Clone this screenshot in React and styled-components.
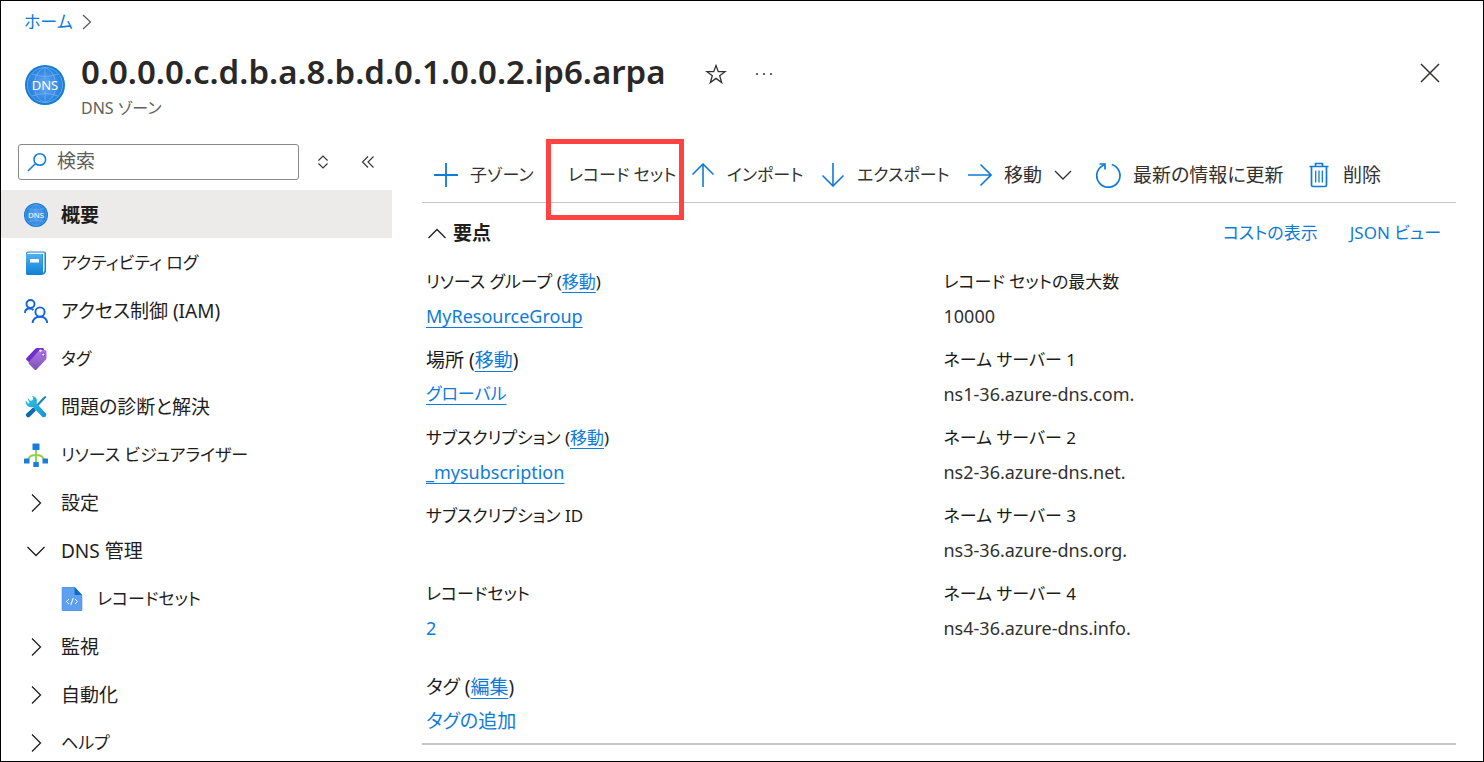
import React from "react";
import styled, { createGlobalStyle, css } from "styled-components";

const BLUE = "#0f7bd8";

const GlobalStyle = createGlobalStyle`
  *, *::before, *::after { box-sizing: border-box; }
  body {
    margin: 0;
    background: #fff;
    color: #1f1e1d;
    font-family: "Noto Sans", "Noto Sans CJK JP", sans-serif;
    font-size: 19px;
    line-height: 28px;
    font-feature-settings: "palt";
  }
  button, input { font: inherit; font-feature-settings: inherit; color: inherit; }
`;

/* Katakana-heavy labels are set a step smaller than kanji and Latin ones. */
const textSize = (p) => css`
  font-size: ${p.$kana ? 17 : 19}px;
`;

const Frame = styled.div`
  display: flex;
  flex-direction: column;
  height: 100vh;
  overflow: hidden;
  border: 1px solid #000;
`;

const Breadcrumb = styled.nav`
  display: flex;
  align-items: center;
  gap: 8px;
  height: 42px;
  flex: none;
  padding-left: 23px;
  font-size: 17px;
`;

const Link = styled.a`
  color: ${BLUE};
  text-decoration: none;
  ${(p) =>
    p.$underlined &&
    css`
      text-decoration: underline;
      text-decoration-thickness: 1px;
      text-decoration-skip-ink: none;
      text-underline-offset: 4px;
    `}
`;

const Header = styled.header`
  display: flex;
  align-items: flex-start;
  height: 94px;
  flex: none;
  padding: 5px 41px 0 24px;
`;

const HeaderLogo = styled.span`
  display: flex;
  margin: 17px 16px 0 0;
`;

const Title = styled.h1`
  margin: 0;
  font-size: 33px;
  line-height: 48px;
  font-weight: 600;
  color: #292827;
`;

const Subtitle = styled.p`
  margin: 0;
  font-size: 16px;
  line-height: 24px;
  color: #605e5c;
`;

const IconButton = styled.button`
  display: flex;
  align-items: center;
  justify-content: center;
  width: 24px;
  height: 24px;
  padding: 0;
  border: 0;
  background: none;
  color: #323130;
`;

const TitleActions = styled.div`
  display: flex;
  gap: 24px;
  margin: 14px auto 0 38px;
`;

const CloseSlot = styled.div`
  margin-top: 13px;
`;

const Columns = styled.div`
  display: flex;
  flex: 1;
  min-height: 0;
`;

const Sidebar = styled.aside`
  flex: none;
  width: 391px;
  margin-right: 30px;
  overflow: hidden;
`;

const SearchRow = styled.div`
  display: flex;
  align-items: center;
  height: 53px;
  padding: 6px 0 10px 17px;
`;

const SearchBox = styled.label`
  display: flex;
  align-items: center;
  gap: 10px;
  width: 281px;
  height: 36px;
  margin-right: 12px;
  padding: 0 8px;
  border: 1px solid #8a8886;
  border-radius: 3px;
  color: ${BLUE};
`;

const SearchInput = styled.input`
  flex: 1;
  min-width: 0;
  padding: 0 0 2px;
  border: 0;
  outline: 0;
  background: none;
  &::placeholder { color: #605e5c; opacity: 1; }
`;

const SearchActions = styled.div`
  display: flex;
  gap: 21px;
`;

const Menu = styled.ul`
  margin: 0;
  padding: 0;
  list-style: none;
`;

const MenuItem = styled.a`
  display: flex;
  align-items: center;
  gap: 13px;
  height: 48px;
  padding: 2px 0 0 ${(p) => (p.$nested ? 59 : 23)}px;
  color: inherit;
  text-decoration: none;
  ${textSize}
  font-weight: ${(p) => (p.$active ? 600 : "inherit")};
  background: ${(p) => (p.$active ? "#edebe9" : "none")};
`;

const Main = styled.main`
  flex: 1;
  min-width: 0;
  margin-right: 27px;
`;

const Toolbar = styled.div`
  display: flex;
  height: 66px;
  padding: 10px 0 0 12px;
  border-bottom: 1px solid #c8c6c4;
`;

const Command = styled.button`
  display: flex;
  flex: none;
  align-items: center;
  gap: 12px;
  position: relative;
  width: ${(p) => p.$width}px;
  padding: 0;
  border: 0;
  background: none;
  color: #323130;
  ${textSize}
  text-align: left;
  white-space: nowrap;
`;

const Highlight = styled.span`
  position: absolute;
  left: -22px;
  top: -8px;
  width: 138px;
  height: 81px;
  border: 5px solid #ff4343;
`;

const EssentialsBar = styled.div`
  display: flex;
  align-items: center;
  justify-content: space-between;
  height: 59px;
  padding: 0 15px 0 5px;
`;

const Toggle = styled.button`
  display: flex;
  align-items: center;
  gap: 6px;
  padding: 0;
  border: 0;
  background: none;
  font-weight: 600;
`;

const ViewLinks = styled.div`
  display: flex;
  gap: 32px;
  font-size: 17px;
`;

const Fields = styled.div`
  display: grid;
  grid-template-columns: 1fr 1fr;
  column-gap: 5px;
  padding: 6px 0 0 4px;
`;

const FieldColumn = styled.dl`
  display: flex;
  flex-direction: column;
  gap: 15px;
  margin: 0;
`;

const Field = styled.div`
  display: flex;
  flex-direction: column;
  align-items: flex-start;
  gap: 6px;
  height: 63px;
`;

const Label = styled.dt`
  ${textSize}
  color: #1b1a19;
`;

const Value = styled.dd`
  margin: 0;
  font-size: ${(p) => (p.$kana ? 17 : 18)}px;
  color: #323130;
`;

const Tags = styled.div`
  padding: 27px 0 5px 4px;
  border-bottom: 2px solid #c8c8c8;
`;

const TagLine = styled.div`
  line-height: 34px;
`;

/* ---------- icons ---------- */

const Stroke = ({ w = 24, h = 24, d, color = "currentColor", sw = 1.3 }) => (
  <svg width={w} height={h} viewBox={`0 0 ${w} ${h}`} fill="none" stroke={color} strokeWidth={sw} aria-hidden="true">
    <path d={d} />
  </svg>
);

const DnsIcon = ({ size, id }) => (
  <svg width={size} height={size} viewBox="0 0 40 40" aria-hidden="true">
    <defs>
      <radialGradient id={id}>
        <stop offset="0.2" stopColor="#5ea0ef" />
        <stop offset="0.75" stopColor="#2f87e0" />
        <stop offset="1" stopColor="#0f78d4" />
      </radialGradient>
    </defs>
    <circle cx="20" cy="20" r="20" fill={`url(#${id})`} />
    <g fill="none" stroke="#7db8f5" strokeWidth="0.9" opacity="0.8">
      <circle cx="20" cy="20" r="17.5" />
      <path d="M10 15Q11.500 6 20 2.500Q28.500 6 30 15M10 26Q11.500 34 20 37.500Q28.500 34 30 26" />
      <path d="M7 9Q20 14 33 9M7 31Q20 26 33 31M20 2.500V14M20 26V37.500" />
    </g>
    <text x="20" y="25" fontFamily="Noto Sans, sans-serif" fontSize="13" fontWeight="400" textAnchor="middle" fill="#fff">DNS</text>
  </svg>
);

const BookIcon = () => (
  <svg width="24" height="24" viewBox="0 0 24 24" aria-hidden="true">
    <defs>
      <linearGradient id="book" x1="0" y1="0" x2="0" y2="1">
        <stop offset="0" stopColor="#50b0ee" />
        <stop offset="1" stopColor="#0f7fd6" />
      </linearGradient>
    </defs>
    <path d="M4 0.500H20Q22 0.500 22 2V21L20 23.500H4Q2 23.500 2 21.500V2.500Q2 0.500 4 0.500Z" fill="#1b86cc" />
    <path d="M4 1.500H20.500V20L19 22V3H3Q3 1.500 4 1.500Z" fill="#e6f4fd" />
    <path d="M2 3H18.500V24H3.500Q2 24 2 22.500Z" fill="url(#book)" />
    <rect x="6" y="8" width="9" height="3.500" rx="0.500" fill="#fff" />
  </svg>
);

const PeopleIcon = () => (
  <svg width="24" height="24" viewBox="0 0 24 24" fill="none" stroke="#1264dc" strokeWidth="1.900" aria-hidden="true">
    <circle cx="6.500" cy="5" r="4" />
    <path d="M1 14Q1 9.500 5.500 9.500Q8 9.500 9.500 11" />
    <circle cx="16" cy="13" r="4.600" />
    <path d="M8.500 24Q9.500 17.800 16 17.800T23.300 24" />
  </svg>
);

const TagIcon = () => (
  <svg width="24" height="24" viewBox="0 0 24 24" aria-hidden="true">
    <defs>
      <linearGradient id="tag" x1="0" y1="0" x2="0" y2="1">
        <stop offset="0" stopColor="#b07ae0" />
        <stop offset="1" stopColor="#7d4fb8" />
      </linearGradient>
    </defs>
    <path d="M11 2Q12 1 13.500 1H18.500Q20 1 20 2.500V7L7 17L2.500 13Q1.500 12 2.500 11Z" fill="#6f2fd0" />
    <path d="M14.500 4Q15.500 3 17 3H21Q22.500 3 22.500 4.500V11Q22.500 12 21.500 13L12.500 22.500Q11.500 23.500 10.500 22.500L5 17Q4 16 5 15Z" fill="url(#tag)" />
    <circle cx="16.500" cy="3.600" r="1.200" fill="#fff" />
    <circle cx="19.200" cy="7.600" r="1.600" fill="#fff" stroke="#6f2fd0" strokeWidth="0.900" />
  </svg>
);

const ToolsIcon = () => (
  <svg width="24" height="24" viewBox="0 0 24 24" aria-hidden="true">
    <defs>
      <linearGradient id="wrench" x1="0" y1="0" x2="1" y2="1">
        <stop offset="0" stopColor="#2fc4e8" />
        <stop offset="1" stopColor="#1993cc" />
      </linearGradient>
    </defs>
    <path d="M21.500 1L22.500 2L10.500 15L9 13.500L19.500 2Z" fill="#1a87b8" />
    <path d="M9 12.500L12 15.500L5.500 22Q4 23 2.500 21.500T2.300 18.700Z" fill="#0f6cab" />
    <path d="M3.300 2.700L6.300 5.700L8.600 5.200L9.200 2.600L7.500 1Q12.500 1 13 5.500L12.600 8.500L21.800 18.200Q23 20 21.700 21.500Q20 23 18.200 21.800L9 12Q5 13 3 10.500Q1 8 1.700 5.500L4.300 8.500L5.500 8Z" fill="url(#wrench)" />
  </svg>
);

const TreeIcon = () => (
  <svg width="24" height="24" viewBox="0 0 24 24" aria-hidden="true">
    <path d="M12 7V19M4 17Q5 12 12 12T20 17" fill="none" stroke="#8fd04a" strokeWidth="1.900" />
    <g fill="#1b7ddb">
      <rect x="8.500" y="0.500" width="7" height="6.500" rx="0.500" />
      <rect x="0" y="15.500" width="5.500" height="5" rx="0.500" />
      <rect x="9.300" y="19" width="5.500" height="5" rx="0.500" />
      <rect x="18.500" y="15.500" width="5.500" height="5" rx="0.500" />
    </g>
  </svg>
);

const RecordIcon = () => (
  <svg width="24" height="24" viewBox="0 0 24 24" aria-hidden="true">
    <path d="M2 1Q2 0 3 0H14.500L22 8V23Q22 24 21 24H3Q2 24 2 23Z" fill="#5ea0ef" stroke="#2f86e0" strokeWidth="0.500" />
    <path d="M14.500 0L22 8H15.500Q14.500 8 14.500 7Z" fill="#0f6fc8" />
    <path d="M9 12L6.500 14.500L9 17M15 12L17.500 14.500L15 17M13.200 11L10.800 18" fill="none" stroke="#fff" strokeWidth="1" />
  </svg>
);

const TrashIcon = () => (
  <svg width="24" height="26" viewBox="0 0 24 26" fill="none" stroke={BLUE} strokeWidth="1.700" aria-hidden="true">
    <path d="M2.500 4.500H21.500M8.500 4V1.500H15.500V4M4.500 4.500V23Q4.500 24.500 6 24.500H18Q19.500 24.500 19.500 23V4.500" />
    <path d="M8.700 8.500V20.500M12 8.500V20.500M15.300 8.500V20.500" strokeWidth="1.300" />
  </svg>
);

const RefreshIcon = () => (
  <svg width="26" height="26" viewBox="0 0 26 26" fill="none" stroke={BLUE} strokeWidth="1.700" aria-hidden="true">
    <path d="M16.800 2.500A11.600 11.600 0 1 1 7.800 3.400L9.500 2.500" />
    <path d="M4.500 2H10V7.500" />
  </svg>
);

const chevronRight = <Stroke d="M8 3.500L16.500 12L8 20.500" />;
const chevronDown = <Stroke d="M3.500 8L12 16.500L20.500 8" />;

const menu = [
  { text: "概要", icon: <DnsIcon size={24} id="dnsSmall" />, active: true },
  { text: "アクティビティ ログ", icon: <BookIcon />, kana: true },
  { text: "アクセス制御 (IAM)", icon: <PeopleIcon /> },
  { text: "タグ", icon: <TagIcon />, kana: true },
  { text: "問題の診断と解決", icon: <ToolsIcon /> },
  { text: "リソース ビジュアライザー", icon: <TreeIcon />, kana: true },
  { text: "設定", icon: chevronRight },
  { text: "DNS 管理", icon: chevronDown },
  { text: "レコードセット", icon: <RecordIcon />, nested: true, kana: true },
  { text: "監視", icon: chevronRight },
  { text: "自動化", icon: chevronRight },
  { text: "ヘルプ", icon: chevronRight, kana: true },
];

const commands = [
  { text: "子ゾーン", width: 134, kana: true, icon: <Stroke color={BLUE} sw={1.8} d="M12 0V24M0 12H24" /> },
  { text: "レコード セット", width: 123, kana: true, highlighted: true },
  { text: "インポート", width: 130, kana: true, icon: <Stroke color={BLUE} sw={1.6} d="M12 1V24M1.500 11.500L12 1L22.500 11.500" /> },
  { text: "エクスポート", width: 147, kana: true, icon: <Stroke color={BLUE} sw={1.6} d="M12 0V23M1.500 12.500L12 23L22.500 12.500" /> },
  { text: "移動", width: 127, icon: <Stroke color={BLUE} sw={1.6} d="M0 12H23M12.500 1.500L23 12L12.500 22.500" />, menu: true },
  { text: "最新の情報に更新", width: 212, icon: <RefreshIcon /> },
  { text: "削除", width: 80, icon: <TrashIcon /> },
];

const leftFields = [
  { label: "リソース グループ", kana: true, action: "移動", value: "MyResourceGroup", link: true, underlined: true },
  { label: "場所", action: "移動", value: "グローバル", kanaValue: true, link: true, underlined: true },
  { label: "サブスクリプション", kana: true, action: "移動", value: "_mysubscription", link: true, underlined: true },
  { label: "サブスクリプション ID", kana: true, value: "" },
  { label: "レコードセット", kana: true, value: "2", link: true },
];

const rightFields = [
  { label: "レコード セットの最大数", kana: true, value: "10000" },
  { label: "ネーム サーバー 1", kana: true, value: "ns1-36.azure-dns.com." },
  { label: "ネーム サーバー 2", kana: true, value: "ns2-36.azure-dns.net." },
  { label: "ネーム サーバー 3", kana: true, value: "ns3-36.azure-dns.org." },
  { label: "ネーム サーバー 4", kana: true, value: "ns4-36.azure-dns.info." },
];

const FieldList = ({ fields }) => (
  <FieldColumn>
    {fields.map((f) => (
      <Field key={f.label}>
        <Label $kana={f.kana}>
          {f.label}
          {f.action && (
            <>
              {" ("}
              <Link href="#" $underlined>{f.action}</Link>)
            </>
          )}
        </Label>
        <Value $kana={f.kanaValue}>
          {f.link ? <Link href="#" $underlined={f.underlined}>{f.value}</Link> : f.value}
        </Value>
      </Field>
    ))}
  </FieldColumn>
);

export default function App() {
  return (
    <>
      <GlobalStyle />
      <Frame>
        <Breadcrumb aria-label="breadcrumb">
          <Link href="#">ホーム</Link>
          <Stroke w={12} h={18} color="#605e5c" d="M2 2L9.500 9L2 16" />
        </Breadcrumb>
        <Header>
          <HeaderLogo><DnsIcon size={40} id="dnsLarge" /></HeaderLogo>
          <div>
            <Title>0.0.0.0.c.d.b.a.8.b.d.0.1.0.0.2.ip6.arpa</Title>
            <Subtitle>DNS ゾーン</Subtitle>
          </div>
          <TitleActions>
            <IconButton aria-label="お気に入り">
              <Stroke d="M12 3.500L14.300 9.700H21L15.700 13.700L17.700 20.500L12 16.400L6.300 20.500L8.300 13.700L3 9.700H9.700Z" />
            </IconButton>
            <IconButton aria-label="その他">
              <svg width="18" height="4" viewBox="0 0 18 4" fill="#323130" aria-hidden="true">
                <circle cx="2" cy="2" r="1" /><circle cx="9" cy="2" r="1" /><circle cx="16" cy="2" r="1" />
              </svg>
            </IconButton>
          </TitleActions>
          <CloseSlot>
            <IconButton aria-label="閉じる">
              <Stroke d="M3 3L21 21M21 3L3 21" sw={1.5} />
            </IconButton>
          </CloseSlot>
        </Header>
        <Columns>
          <Sidebar>
            <SearchRow>
              <SearchBox>
                <Stroke w={20} h={20} sw={1.5} d="M1 19L8 12M7 7.500A5.800 5.800 0 1 0 18.600 7.500A5.800 5.800 0 1 0 7 7.500" />
                <SearchInput type="text" placeholder="検索" aria-label="検索" />
              </SearchBox>
              <SearchActions>
                <IconButton aria-label="展開"><Stroke w={12} h={14} sw={1.1} d="M1.500 5.500L6 1L10.500 5.500M1.500 8.500L6 13L10.500 8.500" /></IconButton>
                <IconButton aria-label="折りたたむ"><Stroke w={14} h={14} sw={1.1} d="M7 1.500L1.500 7L7 12.500M12.500 1.500L7 7L12.500 12.500" /></IconButton>
              </SearchActions>
            </SearchRow>
            <Menu>
              {menu.map((m) => (
                <li key={m.text}>
                  <MenuItem href="#" $active={m.active} $nested={m.nested} $kana={m.kana}>
                    {m.icon}
                    <span>{m.text}</span>
                  </MenuItem>
                </li>
              ))}
            </Menu>
          </Sidebar>
          <Main>
            <Toolbar>
              {commands.map((c) => (
                <Command key={c.text} $width={c.width} $kana={c.kana}>
                  {c.icon}
                  <span>{c.text}</span>
                  {c.menu && <Stroke w={18} h={24} d="M1 8L9 16L17 8" />}
                  {c.highlighted && <Highlight />}
                </Command>
              ))}
            </Toolbar>
            <EssentialsBar>
              <Toggle>
                <Stroke w={20} h={24} d="M1.500 17L10 8.500L18.500 17" />
                要点
              </Toggle>
              <ViewLinks>
                <Link href="#">コストの表示</Link>
                <Link href="#">JSON ビュー</Link>
              </ViewLinks>
            </EssentialsBar>
            <Fields>
              <FieldList fields={leftFields} />
              <FieldList fields={rightFields} />
            </Fields>
            <Tags>
              <TagLine>タグ (<Link href="#" $underlined>編集</Link>)</TagLine>
              <TagLine><Link href="#">タグの追加</Link></TagLine>
            </Tags>
          </Main>
        </Columns>
      </Frame>
    </>
  );
}
